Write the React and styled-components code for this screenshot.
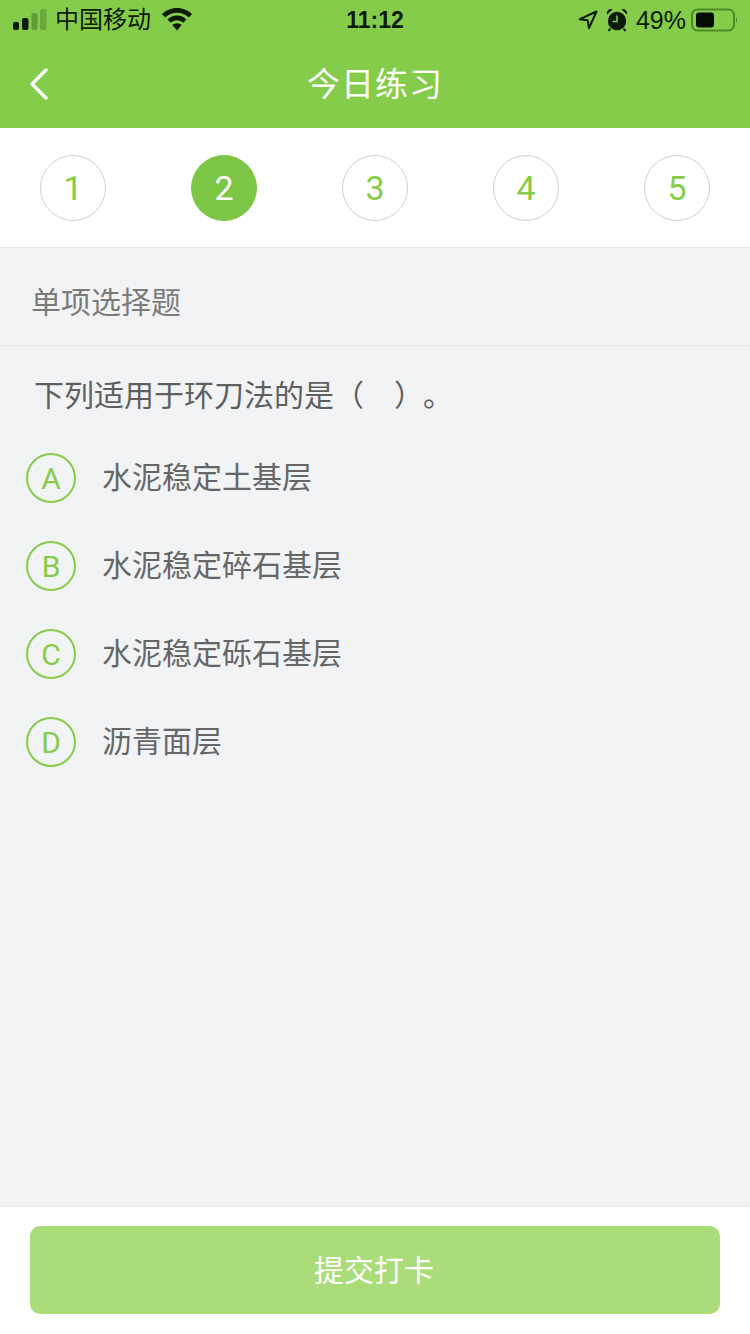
import React from 'react'
import styled, { createGlobalStyle } from 'styled-components'

const GlobalStyle = createGlobalStyle`
  html, body {
    margin: 0;
    padding: 0;
    background: #f2f3f5;
  }
  * { box-sizing: border-box; }
`

const FONT = `"Liberation Sans", "Noto Sans CJK SC", sans-serif`
const DIGITS = `Roboto, "Liberation Sans", sans-serif`
const GREEN = '#85cc4b'

const Page = styled.div`
  width: 750px;
  height: 1334px;
  display: flex;
  flex-direction: column;
  background: #f2f3f5;
  font-family: ${FONT};
  overflow: hidden;
`

const Top = styled.div`
  height: 128px;
  flex-shrink: 0;
  background: ${GREEN};
`

const StatusBar = styled.div`
  height: 40px;
  padding: 0 13px;
  display: grid;
  grid-template-columns: 1fr auto 1fr;
  align-items: center;
  color: #0c1a06;
`

const StatusLeft = styled.div`
  display: flex;
  align-items: center;
`

const Carrier = styled.span`
  font-size: 24px;
  line-height: 30px;
  margin: 0 11px 0 8px;
`

const Clock = styled.span`
  font-size: 23px;
  font-weight: 700;
`

const StatusRight = styled.div`
  display: flex;
  align-items: center;
  justify-content: flex-end;
`

const Percent = styled.span`
  font-size: 25px;
  margin: 0 5px 0 8px;
`

const AlarmIcon = styled.svg`
  margin-left: 8px;
`

const NavBar = styled.div`
  height: 88px;
  padding: 0 29px;
  display: grid;
  grid-template-columns: 1fr auto 1fr;
  align-items: center;
`

const NavTitle = styled.div`
  color: #fff;
  font-size: 33px;
  letter-spacing: 1px;
  margin-bottom: 4px;
`

const Steps = styled.div`
  height: 120px;
  flex-shrink: 0;
  padding: 1px 40px 0;
  display: flex;
  align-items: center;
  justify-content: space-between;
  background: #fff;
  border-bottom: 1px solid #e6e6e6;
`

const Step = styled.div`
  width: 66px;
  height: 66px;
  border-radius: 50%;
  display: flex;
  align-items: center;
  justify-content: center;
  font-family: ${DIGITS};
  font-size: 34px;
  color: ${p => (p.$active ? '#fff' : GREEN)};
  background: ${p => (p.$active ? '#7dc645' : '#fff')};
  border: 1px solid ${p => (p.$active ? '#7dc645' : '#cfcfcf')};
`

const SectionTitle = styled.div`
  height: 98px;
  flex-shrink: 0;
  padding: 6px 0 0 31px;
  display: flex;
  align-items: center;
  font-size: 30px;
  color: #7b7b7b;
  border-bottom: 1px solid #e6e7e9;
`

const Body = styled.div`
  flex: 1;
  padding: 30px 0 0 26px;
`

const Question = styled.div`
  font-size: 30px;
  line-height: 40px;
  color: #5f5f5f;
  padding-left: 8px;
  margin-bottom: 37px;
`

const QuestionEnd = styled.span`
  margin-left: 14px;
`

const Options = styled.div`
  display: flex;
  flex-direction: column;
  gap: 38px;
`

const Option = styled.div`
  display: flex;
  align-items: center;
  gap: 26px;
`

const OptionKey = styled.div`
  width: 50px;
  height: 50px;
  padding-top: 1px;
  border-radius: 50%;
  border: 2px solid ${GREEN};
  display: flex;
  align-items: center;
  justify-content: center;
  font-family: ${DIGITS};
  font-size: 30px;
  color: ${GREEN};
`

const OptionText = styled.div`
  font-size: 30px;
  line-height: 40px;
  color: #666;
`

const Footer = styled.div`
  height: 128px;
  flex-shrink: 0;
  padding: 19px 30px 20px;
  background: #fff;
  border-top: 1px solid #e6e7e9;
`

const SubmitButton = styled.button`
  width: 100%;
  height: 88px;
  padding: 0 2px 4px 0;
  border: none;
  border-radius: 10px;
  background: #aadc79;
  color: #fff;
  font-family: inherit;
  font-size: 30px;
`

const Signal = () => (
  <svg width="34" height="32" viewBox="0 0 34 32">
    <rect x="0" y="18" width="6" height="8" rx="2" fill="#0c1a06" />
    <rect x="9" y="14" width="6.5" height="12" rx="2" fill="#0c1a06" />
    <rect x="18.5" y="9" width="6" height="17" rx="2" fill="#5f9c35" />
    <rect x="27" y="5" width="6.5" height="21" rx="2" fill="#6aa83c" />
  </svg>
)

const Wifi = () => (
  <svg width="30" height="24" viewBox="0 0 30 24" fill="#0c1a06">
    <path d="M15 0C9 0 3.8 2.3 0 6.2L3.2 9.6C6.2 6.6 10.4 4.7 15 4.7s8.8 1.9 11.8 4.9L30 6.2C26.2 2.3 21 0 15 0z" />
    <path d="M15 7.6c-3.7 0-7 1.4-9.5 3.9l3.2 3.3C10.4 13.2 12.6 12.2 15 12.2s4.6 1 6.3 2.6l3.2-3.3C22 9 18.7 7.6 15 7.6z" />
    <path d="M15 15.2c-1.8 0-3.4 0.7-4.6 1.8L15 22.5l4.6-5.5C18.4 15.9 16.8 15.2 15 15.2z" />
  </svg>
)

const Location = () => (
  <svg width="20" height="20" viewBox="0 0 20 20" fill="none" stroke="#0c1a06" strokeWidth="2" strokeLinejoin="round">
    <path d="M18.5 1.5L1.8 9.2l7.9 1.1 1.3 7.9z" />
  </svg>
)

const Alarm = () => (
  <AlarmIcon width="22" height="24" viewBox="0 0 22 24">
    <circle cx="11" cy="13" r="9.2" fill="#0c1a06" />
    <path d="M1 6.5A4 4 0 0 1 6.6 1.6zM21 6.5A4 4 0 0 0 15.4 1.6z" fill="#0c1a06" />
    <path d="M4.5 20.5L2.5 23M17.5 20.5l2 2.5" stroke="#0c1a06" strokeWidth="2" />
    <path d="M11 7.5v6H6.5" fill="none" stroke={GREEN} strokeWidth="1.6" />
  </AlarmIcon>
)

const Battery = () => (
  <svg width="46" height="24" viewBox="0 0 46 24">
    <rect x="1" y="1.5" width="42" height="21" rx="5.5" fill="none" stroke="#4f8a2a" strokeWidth="2" />
    <rect x="5" y="4.5" width="18" height="15" rx="3" fill="#050a03" />
    <path d="M45 9v6a3 3 0 0 0 1-3A3 3 0 0 0 45 9z" fill="#4f8a2a" />
  </svg>
)

const BackArrow = () => (
  <svg width="20" height="32" viewBox="0 0 20 32" fill="none" stroke="#fff" strokeWidth="3.4" strokeLinecap="round" strokeLinejoin="round">
    <path d="M17 2L3 16l14 14" />
  </svg>
)

const options = [
  { key: 'A', text: '水泥稳定土基层' },
  { key: 'B', text: '水泥稳定碎石基层' },
  { key: 'C', text: '水泥稳定砾石基层' },
  { key: 'D', text: '沥青面层' },
]

const App = () => {
  return (
    <Page>
      <GlobalStyle />
      <Top>
        <StatusBar>
          <StatusLeft>
            <Signal />
            <Carrier>中国移动</Carrier>
            <Wifi />
          </StatusLeft>
          <Clock>11:12</Clock>
          <StatusRight>
            <Location />
            <Alarm />
            <Percent>49%</Percent>
            <Battery />
          </StatusRight>
        </StatusBar>
        <NavBar>
          <BackArrow />
          <NavTitle>今日练习</NavTitle>
        </NavBar>
      </Top>
      <Steps>
        {[1, 2, 3, 4, 5].map(n => (
          <Step key={n} $active={n === 2}>{n}</Step>
        ))}
      </Steps>
      <SectionTitle>单项选择题</SectionTitle>
      <Body>
        <Question>下列适用于环刀法的是（　）<QuestionEnd>。</QuestionEnd></Question>
        <Options>
          {options.map(o => (
            <Option key={o.key}>
              <OptionKey>{o.key}</OptionKey>
              <OptionText>{o.text}</OptionText>
            </Option>
          ))}
        </Options>
      </Body>
      <Footer>
        <SubmitButton>提交打卡</SubmitButton>
      </Footer>
    </Page>
  )
}

export default App
